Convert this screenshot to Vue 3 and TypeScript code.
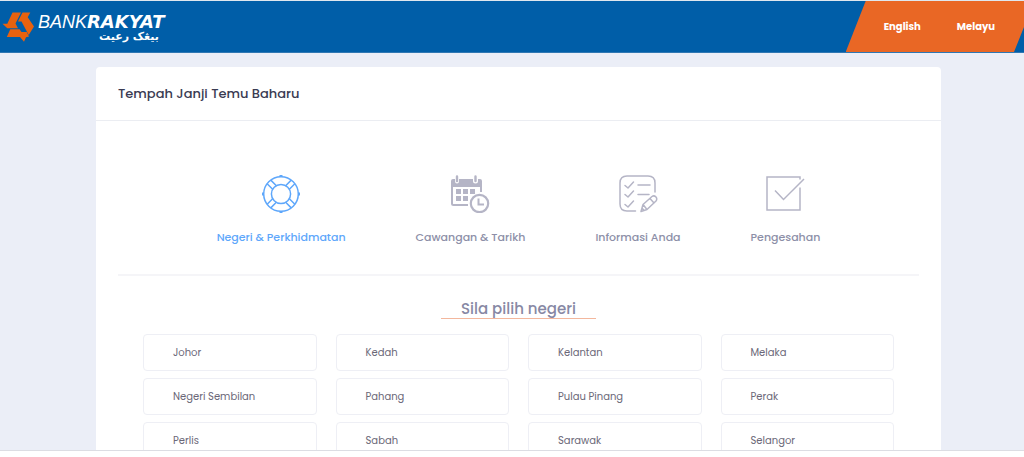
<script setup lang="ts">
import { ref } from 'vue'

const states: string[] = [
  'Johor', 'Kedah', 'Kelantan', 'Melaka',
  'Negeri Sembilan', 'Pahang', 'Pulau Pinang', 'Perak',
  'Perlis', 'Sabah', 'Sarawak', 'Selangor',
]
const selected = ref<string>('')
const spokes: number[] = [45, 135, 225, 315]
</script>

<template>
  <div class="page">
    <header class="topbar">
      <a class="brand" href="#" aria-label="Bank Rakyat">
        <svg width="170" height="42" viewBox="0 0 170 42">
          <g fill="#e8620f">
            <path d="M12.5 6.5H21L15.500 17.500L18 22.300H7.300L2.500 17.700H7.300Z" />
            <path d="M22.500 6.500H30.300L27.700 11.300L34 20.500L28.700 29L21.500 15.500H18Z" />
            <path d="M10.300 23.300H19.500L21.500 26H26.700L29 30.500L26 31.200L24 35.700L20 31H6.800Z" />
          </g>
          <text class="logo-light" x="38" y="22">BANK</text>
          <text class="logo-bold" x="87" y="22">RAKYAT</text>
          <text class="logo-jawi" x="129" y="34" text-anchor="middle">بيڠک رعيت</text>
        </svg>
      </a>
      <nav class="languages">
        <a href="#">English</a>
        <a href="#">Melayu</a>
      </nav>
    </header>

    <main class="content">
      <section class="card">
        <h1 class="card-title">Tempah Janji Temu Baharu</h1>
        <div class="card-body">
          <ol class="steps">
            <li class="step active">
              <svg width="38" height="38" viewBox="0 0 38 38" fill="none" stroke="currentColor" stroke-width="1.5">
                <circle cx="19" cy="19" r="17.3" />
                <circle cx="19" cy="19" r="9.6" />
                <g v-for="angle in spokes" :key="angle" :transform="`rotate(${angle} 19 19)`">
                  <path d="M28.2 16.4H36M28.2 21.6H36" />
                </g>
                <path d="M17.5 1H20.5M17.5 37H20.5M1 17.5V20.5M37 17.5V20.5" stroke-width="2" />
              </svg>
              <span>Negeri &amp; Perkhidmatan</span>
            </li>
            <li class="step">
              <svg width="40" height="38" viewBox="0 0 40 38" fill="none" stroke="currentColor">
                <path d="M1 12V6Q1 4 3 4H5V6Q5 8.500 7 8.500T9 6V4H23V6Q23 8.500 25.500 8.500T28 6V4H30Q32 4 32 6V12Z" fill="currentColor" stroke="none" />
                <path d="M2 10V28.500Q2 30 3.500 30H18M31 10V17" stroke-width="2" />
                <path d="M7 1.500V6M25.500 1.500V6" stroke-width="2.400" stroke-linecap="round" />
                <path d="M6 14h5v5H6zM13 14h5v5h-5zM20 14h5v5h-5zM6 21h5v5H6zM13 21h5v5h-5z" fill="currentColor" stroke="none" />
                <circle cx="29.500" cy="28.500" r="8.700" stroke-width="2.200" />
                <path d="M28.500 23.500V29.500H34" stroke-width="2" />
              </svg>
              <span>Cawangan &amp; Tarikh</span>
            </li>
            <li class="step">
              <svg width="40" height="38" viewBox="0 0 40 38" fill="none" stroke="currentColor" stroke-width="1.500" stroke-linecap="round" stroke-linejoin="round">
                <path d="M17.500 36H9Q2 36 2 29V8Q2 1 9 1H30Q37 1 37 8V17" />
                <path d="M7 10.500L10 13L15.500 7M7 19.500L10 22L15.500 16M7 29.500L10 32L15.500 26M20 10H32M20 19.500H31" />
                <path d="M23 36.500L25 29.500L34 21.500Q36 20 38 22Q39.500 24 38 26L29 34.500ZM25 29.500L29 34.500M32 23.500L36 28M24 33L26 35.500" />
              </svg>
              <span>Informasi Anda</span>
            </li>
            <li class="step">
              <svg width="40" height="38" viewBox="0 0 40 38" fill="none" stroke="currentColor" stroke-width="1.500">
                <path d="M35 4.500V2H2V35H35V12.500" />
                <path d="M10 15.500L18.500 24.500L39 4" />
              </svg>
              <span>Pengesahan</span>
            </li>
          </ol>

          <h2 class="question"><span>Sila pilih negeri</span></h2>
          <div class="states">
            <button
              v-for="state in states"
              :key="state"
              type="button"
              :aria-pressed="selected === state"
              @click="selected = state"
            >{{ state }}</button>
          </div>
        </div>
      </section>
    </main>
    <footer class="bottom"></footer>
  </div>
</template>

<style scoped>
.page {
  display: flex;
  flex-direction: column;
  height: 100vh;
  overflow: hidden;
  background: #ebeef7;
  font-family: Poppins, Inter, "Liberation Sans", sans-serif;
}
.topbar {
  display: flex;
  flex: none;
  justify-content: space-between;
  height: 51px;
  border-top: 1px solid #dfe7ef;
  border-bottom: 1px solid #2f77b3;
  background: #005ea8;
}
.brand {
  padding-top: 5px;
}
.brand svg {
  display: block;
}
.logo-light,
.logo-bold,
.logo-jawi {
  fill: #fff;
}
.logo-light {
  font: italic 400 18px "Liberation Sans", sans-serif;
}
.logo-bold {
  font: italic 700 18px "DejaVu Sans", sans-serif;
}
.logo-jawi {
  font: 700 11px "DejaVu Sans", sans-serif;
}
.languages {
  display: flex;
  align-items: center;
  gap: 36px;
  padding: 0 29px 0 38px;
  background: #e96725;
  clip-path: polygon(20px 0, 100% 0, 100% 26px, calc(100% - 10px) 100%, 0 100%);
}
.languages a {
  color: #fff;
  font-size: 10px;
  font-weight: 700;
  text-decoration: none;
}
.content {
  flex: 1;
  min-height: 0;
  overflow: hidden;
  padding: 14px 83px 0 96px;
}
.card {
  border-radius: 4px;
  background: #fff;
}
.card-title {
  margin: 0;
  padding: 0 22px;
  border-bottom: 1px solid #ebedf2;
  color: #3a3b52;
  font-size: 13px;
  font-weight: 500;
  line-height: 53px;
}
.card-body {
  padding: 0 22px 22px;
}
.steps {
  display: flex;
  justify-content: center;
  gap: 70px;
  margin: 0;
  padding: 54px 0 28px;
  border-bottom: 2px solid #f5f5f8;
  list-style: none;
}
.step {
  display: flex;
  flex-direction: column;
  align-items: center;
  gap: 15px;
  color: #8d8fa8;
  font-size: 11px;
  font-weight: 500;
  line-height: 18px;
}
.step svg {
  color: #b5b5c6;
}
.step.active,
.step.active svg {
  color: #5ea7fb;
}
.question {
  display: flex;
  justify-content: center;
  margin: 23px 0 15px;
  color: #8788a4;
  font-size: 15px;
  font-weight: 500;
  line-height: 19px;
}
.question span {
  padding: 0 20px;
  border-bottom: 1px solid #f3b79d;
}
.states {
  display: grid;
  grid-template-columns: repeat(4, 1fr);
  gap: 7px 19px;
  padding: 0 25px;
}
.states button {
  height: 37px;
  padding: 0 29px;
  border: 1px solid #eeeff5;
  border-radius: 4px;
  background: #fff;
  color: #6b6878;
  font-family: inherit;
  font-size: 10px;
  text-align: left;
}
.bottom {
  flex: none;
  height: 6px;
  border-top: 1px solid #dcdde3;
  background: #fff;
}
</style>

<style>
body {
  margin: 0;
}
</style>
